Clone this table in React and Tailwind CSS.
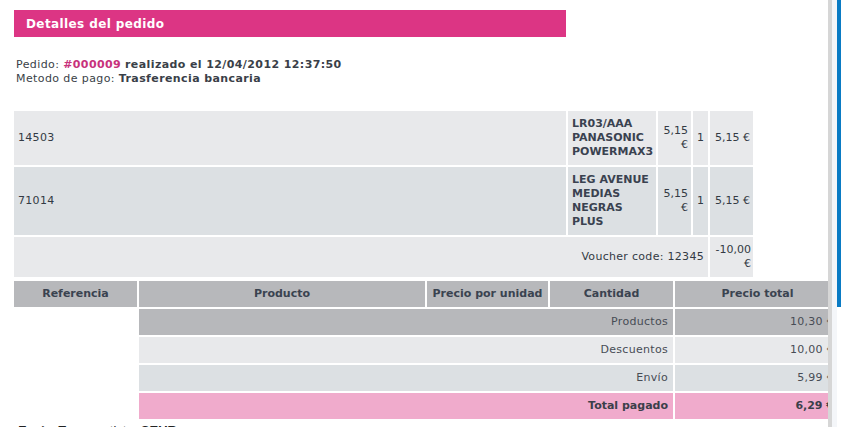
import React from "react";

export default function App() {
  const light = "bg-[#e8e9eb]";
  const mid = "bg-[#dce0e3]";
  const hdr = "bg-[#b7b8bb]";
  return (
    <div className="flex h-[427px] w-[841px] overflow-hidden bg-white font-['DejaVu_Sans',sans-serif] text-[11px] leading-[14px] text-[#333a44]">
      <div className="w-[828px] shrink-0 overflow-hidden pl-[14px] pt-[10px]">
        <div className="flex h-[27px] w-[552px] items-center bg-[#dc3584] pl-[12px] text-[12px] font-bold tracking-[0.4px] text-white">
          Detalles del pedido
        </div>

        <div className="mt-[21px] pl-[2px] tracking-[0.4px] text-[#3a3f48]">
          <div>
            Pedido: <span className="font-bold text-[#c8327c]">#000009</span>{" "}
            <span className="font-bold">realizado el 12/04/2012 12:37:50</span>
          </div>
          <div>
            Metodo de pago: <span className="font-bold">Trasferencia bancaria</span>
          </div>
        </div>

        {/* Products table */}
        <div className="mt-[25px] grid w-[739px] grid-cols-[552px_88px_33px_15px_43px] gap-[2px]">
          <div className={`${light} flex items-center px-[4px] py-[6px] tracking-[0.3px]`}>14503</div>
          <div className={`${light} flex items-center px-[4px] py-[6px] font-bold text-[#3a4250]`}>
            LR03/AAA PANASONIC POWERMAX3
          </div>
          <div className={`${light} flex flex-col justify-center px-[3px] text-right`}>
            <span>5,15</span>
            <span>€</span>
          </div>
          <div className={`${light} flex items-center justify-center`}>1</div>
          <div className={`${light} flex items-center whitespace-nowrap pl-[5px]`}>5,15 €</div>

          <div className={`${mid} flex items-center px-[4px] py-[6px] tracking-[0.3px]`}>71014</div>
          <div className={`${mid} flex items-center px-[4px] py-[6px] font-bold text-[#3a4250]`}>
            LEG AVENUE MEDIAS NEGRAS PLUS
          </div>
          <div className={`${mid} flex flex-col justify-center px-[3px] text-right`}>
            <span>5,15</span>
            <span>€</span>
          </div>
          <div className={`${mid} flex items-center justify-center`}>1</div>
          <div className={`${mid} flex items-center whitespace-nowrap pl-[5px]`}>5,15 €</div>

          <div className={`${light} col-span-4 flex items-center justify-end px-[4px] py-[6px] tracking-[0.3px]`}>
            Voucher code: 12345
          </div>
          <div className={`${light} flex flex-col justify-center py-[6px] pr-[2px] text-right`}>
            <span>-10,00</span>
            <span>€</span>
          </div>
        </div>

        {/* Summary table */}
        <div className="mt-[4px] grid w-[826px] grid-cols-[123px_286px_121px_123px_165px] gap-[2px] text-[#474c55]">
          <div className={`${hdr} flex h-[26px] items-center justify-center font-bold text-[#3a4350]`}>Referencia</div>
          <div className={`${hdr} flex h-[26px] items-center justify-center font-bold text-[#3a4350]`}>Producto</div>
          <div className={`${hdr} flex h-[26px] items-center justify-center font-bold text-[#3a4350]`}>Precio por unidad</div>
          <div className={`${hdr} flex h-[26px] items-center justify-center font-bold text-[#3a4350]`}>Cantidad</div>
          <div className={`${hdr} flex h-[26px] items-center justify-center font-bold text-[#3a4350]`}>Precio total</div>

          <div />
          <div className={`${hdr} col-span-3 flex h-[26px] items-center justify-end pr-[5px] tracking-[0.3px]`}>Productos</div>
          <div className={`${hdr} flex h-[26px] items-center justify-end whitespace-nowrap pr-[6px] tracking-[0.3px]`}>10,30 €</div>

          <div />
          <div className={`${light} col-span-3 flex h-[26px] items-center justify-end pr-[5px] tracking-[0.3px]`}>Descuentos</div>
          <div className={`${light} flex h-[26px] items-center justify-end whitespace-nowrap pr-[6px] tracking-[0.3px]`}>10,00 €</div>

          <div />
          <div className={`${mid} col-span-3 flex h-[26px] items-center justify-end pr-[5px] tracking-[0.3px]`}>Envío</div>
          <div className={`${mid} flex h-[26px] items-center justify-end whitespace-nowrap pr-[6px] tracking-[0.3px]`}>5,99 €</div>

          <div />
          <div className="col-span-3 flex h-[26px] items-center justify-end bg-[#f0abcc] pr-[5px] font-bold text-[#3b3f4a]">
            Total pagado
          </div>
          <div className="flex h-[26px] items-center justify-end whitespace-nowrap bg-[#f0abcc] pr-[6px] font-bold text-[#3b3f4a]">
            6,29 €
          </div>
        </div>

        <div className="mt-[4px] pl-[4px] font-['Liberation_Sans',sans-serif] text-[13px] leading-[15px] text-[#222]">
          Envío: Transportista: <span className="font-bold">SEUR</span>
        </div>
      </div>

      <div className="w-[4px] shrink-0 bg-[#d6d6d6]" />
      <div className="w-[5px] shrink-0 bg-[#f4f6f9]" />
      <div className="w-[4px] shrink-0">
        <div className="h-[307px] bg-[#0a7bc4]" />
      </div>
    </div>
  );
}
